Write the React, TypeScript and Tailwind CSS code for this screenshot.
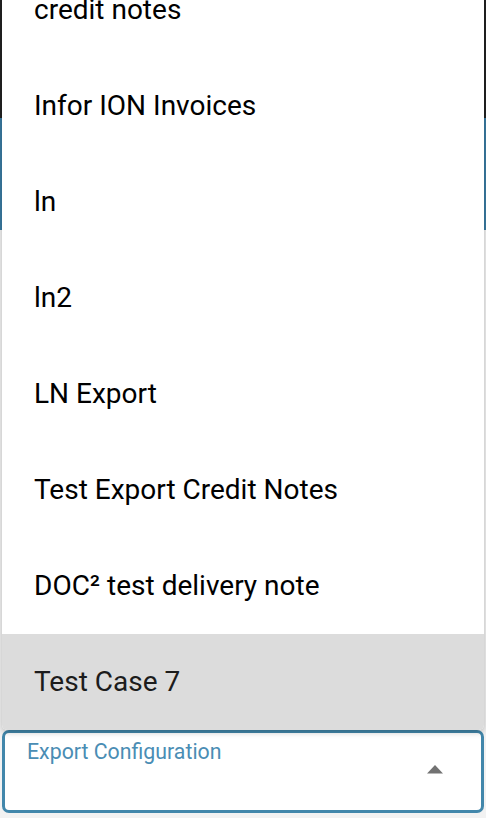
import React from "react";

const options = [
  "credit notes",
  "Infor ION Invoices",
  "ln",
  "ln2",
  "LN Export",
  "Test Export Credit Notes",
  "DOC² test delivery note",
  "Test Case 7",
];

export default function App() {
  const selected = "Test Case 7";

  return (
    <div
      className="relative h-[818px] w-[486px] overflow-hidden bg-[#f2f2f2] flex flex-col"
      style={{ fontFamily: "Roboto, 'Liberation Sans', sans-serif" }}
    >
      <div className="h-[118px] bg-[#222222]" />
      <div className="h-[112px] bg-[#3a7ca3]" />
      <div className="flex-1 flex flex-col justify-end px-[2px] pb-[5px]">
        {/* select field */}
        <div className="relative h-[83px] rounded-[7px] border-[3px] border-[#4287ab] bg-white">
          <span className="absolute left-[22px] top-[6px] text-[21.3px] leading-[26px] text-[#4a8db4]">
            Export Configuration
          </span>
          <svg
            className="absolute right-[37px] top-[31px]"
            width="18"
            height="10"
            viewBox="0 0 18 10"
          >
            <path d="M1 9.5 L9 1 L17 9.5 Z" fill="#727272" />
          </svg>
        </div>
      </div>

      {/* open menu */}
      <ul className="absolute left-[2px] right-[2px] top-[-38px] rounded-b-[5px] bg-white shadow-[0_2px_6px_rgba(0,0,0,0.25)] overflow-hidden">
        {options.map((o) => (
          <li
            key={o}
            className={
              "h-[96px] flex items-center pl-[32px] text-[28px] " +
              (o === selected ? "bg-[#dcdcdc] text-[#1c1c1c]" : "text-black")
            }
          >
            {o}
          </li>
        ))}
      </ul>
    </div>
  );
}
